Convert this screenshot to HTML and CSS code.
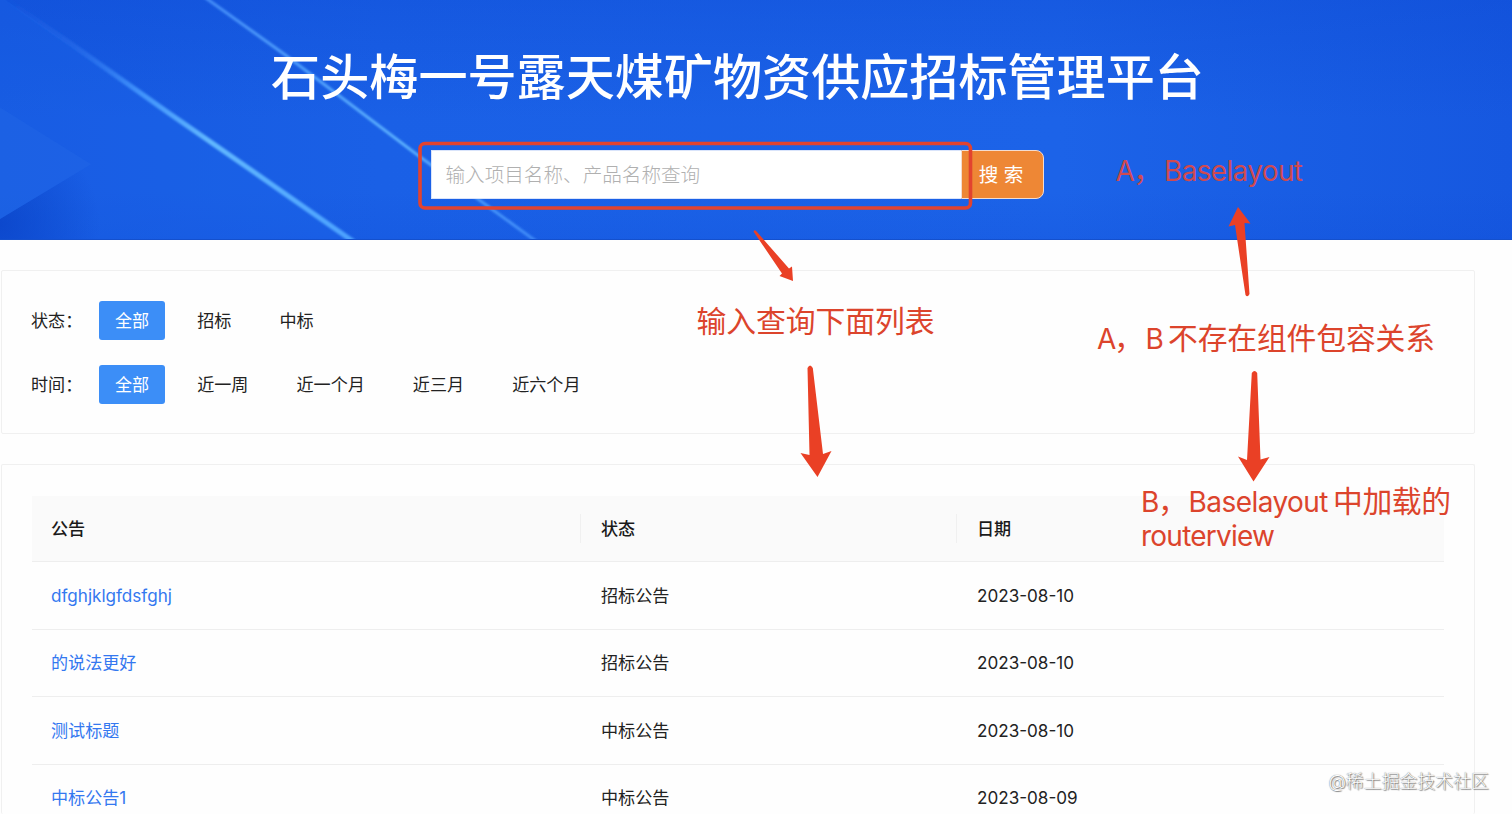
FILE: index.html
```html
<!DOCTYPE html>
<html lang="zh-CN">
<head>
    <meta charset="UTF-8">
    <meta name="viewport" content="width=device-width, initial-scale=1.0">
    <title>石头梅一号露天煤矿物资供应招标管理平台</title>
    <link rel="stylesheet" href="styles.css">
</head>
<body>
    <header class="banner">
        <svg class="banner-bg" viewBox="0 0 1512 240" preserveAspectRatio="none">
            <defs>
                <linearGradient id="base" x1="0" y1="0" x2="1" y2="0">
                    <stop offset="0" stop-color="#1659e0"/>
                    <stop offset="0.25" stop-color="#1a60e6"/>
                    <stop offset="0.7" stop-color="#1c63e8"/>
                    <stop offset="1" stop-color="#1658e0"/>
                </linearGradient>
                <linearGradient id="shade" x1="0" y1="0" x2="0" y2="1">
                    <stop offset="0" stop-color="#0a45d0" stop-opacity="0.3"/>
                    <stop offset="0.5" stop-color="#0a45d0" stop-opacity="0"/>
                    <stop offset="0.8" stop-color="#0a45d0" stop-opacity="0"/>
                    <stop offset="1" stop-color="#0a45d0" stop-opacity="0.15"/>
                </linearGradient>
                <linearGradient id="beam1" gradientUnits="userSpaceOnUse" x1="0" y1="0" x2="350" y2="240">
                    <stop offset="0" stop-color="#2a6ef0" stop-opacity="0"/>
                    <stop offset="0.2" stop-color="#3178f2" stop-opacity="0.4"/>
                    <stop offset="0.4" stop-color="#469aff" stop-opacity="0.9"/>
                    <stop offset="0.6" stop-color="#62b8ff"/>
                    <stop offset="1" stop-color="#4ca2ff"/>
                </linearGradient>
                <linearGradient id="beam2" gradientUnits="userSpaceOnUse" x1="207" y1="0" x2="532" y2="240">
                    <stop offset="0" stop-color="#438cf8"/>
                    <stop offset="0.6" stop-color="#5db2ff"/>
                    <stop offset="1" stop-color="#3f8af8"/>
                </linearGradient>
                <radialGradient id="fold" gradientUnits="userSpaceOnUse" cx="0" cy="225" r="100">
                    <stop offset="0" stop-color="#0840c4" stop-opacity="0.7"/>
                    <stop offset="1" stop-color="#0840c4" stop-opacity="0"/>
                </radialGradient>
                <filter id="soft"><feGaussianBlur stdDeviation="1"/></filter>
            </defs>
            <rect width="1512" height="240" fill="url(#base)"/>
            <rect width="1512" height="240" fill="url(#shade)"/>
            <path d="M0 -4L350 240H0Z" fill="#1f66ec" fill-opacity="0.3"/>
            <path d="M0 220L91 165L120 240H0Z" fill="url(#fold)"/>
            <path d="M0 108L91 165L0 220Z" fill="#2468e6" fill-opacity="0.4"/>
            <path d="M4 -2L71 44L168 113L250 170L354 243" fill="none" stroke="url(#beam1)" stroke-width="5" filter="url(#soft)"/>
            <path d="M203 -4L285 55L418 156L537 243" fill="none" stroke="url(#beam2)" stroke-width="3" filter="url(#soft)"/>
        </svg>
        <div class="banner-content">
            <h1>石头梅一号露天煤矿物资供应招标管理平台</h1>
            <form class="search" onsubmit="return false">
                <input type="text" placeholder="输入项目名称、产品名称查询">
                <button type="submit">搜 索</button>
            </form>
        </div>
    </header>

    <main class="page">
        <section class="card filters">
            <div class="filter-row">
                <span class="label">状态：</span>
                <span class="option active">全部</span>
                <span class="option">招标</span>
                <span class="option">中标</span>
            </div>
            <div class="filter-row">
                <span class="label">时间：</span>
                <span class="option active">全部</span>
                <span class="option">近一周</span>
                <span class="option">近一个月</span>
                <span class="option">近三月</span>
                <span class="option">近六个月</span>
            </div>
        </section>

        <section class="card list">
            <table>
                <colgroup>
                    <col class="col-title">
                    <col class="col-status">
                    <col>
                </colgroup>
                <thead>
                    <tr><th>公告</th><th>状态</th><th>日期</th></tr>
                </thead>
                <tbody>
                    <tr><td><a href="#">dfghjklgfdsfghj</a></td><td>招标公告</td><td>2023-08-10</td></tr>
                    <tr><td><a href="#">的说法更好</a></td><td>招标公告</td><td>2023-08-10</td></tr>
                    <tr><td><a href="#">测试标题</a></td><td>中标公告</td><td>2023-08-10</td></tr>
                    <tr><td><a href="#">中标公告1</a></td><td>中标公告</td><td>2023-08-09</td></tr>
                </tbody>
            </table>
        </section>
    </main>

    <!-- review notes drawn over the page -->
    <svg class="notes" width="1512" height="814" viewBox="0 0 1512 814">
        <rect x="420" y="143.500" width="550.500" height="64.500" rx="5" fill="none" stroke="#e2432f" stroke-width="3.600"/>
        <path d="M753.500 231.500Q755 229 757 232L789 268.500L792 266.500L793 281L779.500 276L782 273.500Z"/>
        <path d="M807.500 368Q810 363 812.800 368L823 454L831.500 451L817.500 477L800.500 453L809.500 455Z"/>
        <path d="M1238 207L1250.500 223.500L1244.500 223L1249.500 294Q1247.500 298 1245.500 295L1235 225L1228.500 226.500Z"/>
        <path d="M1251.800 373Q1254.500 369 1257.200 373L1260.500 459.500L1269.500 457L1253.500 481.500L1238 456.500L1247 460Z"/>
        <text x="696.500" y="332" class="zh" textLength="238">输入查询下面列表</text>
        <text x="1115.500" y="181" class="on-blue">A<tspan class="zh" x="1133">，</tspan><tspan x="1164" textLength="139">Baselayout</tspan></text>
        <text x="1097" y="349">A<tspan class="zh" x="1114">，</tspan><tspan x="1145.500">B</tspan><tspan class="zh" x="1168" textLength="267">不存在组件包容关系</tspan></text>
        <text x="1141" y="512">B<tspan class="zh" x="1158">，</tspan><tspan x="1188.500" textLength="140">Baselayout</tspan><tspan class="zh" x="1333" textLength="118">中加载的</tspan></text>
        <text x="1141" y="546" textLength="134">routerview</text>
    </svg>
    <div class="watermark">@稀土掘金技术社区</div>
</body>
</html>
```

FILE: styles.css
```css
* {
    box-sizing: border-box;
}

body {
    margin: 0;
    height: 814px;
    overflow: hidden;
    position: relative;
    background: #fefefe;
    color: #222;
    font-family: Inter, "Noto Sans CJK SC", sans-serif;
    font-size: 17px;
}

.banner {
    position: relative;
    height: 240px;
    border-bottom: 1px solid #1450cd;
}

.banner-bg {
    position: absolute;
    left: 0;
    top: 0;
    width: 100%;
    height: 100%;
}

.banner-content {
    position: relative;
    width: 1475px;
    display: flex;
    flex-direction: column;
    align-items: center;
}

h1 {
    margin: 42px 0 38px;
    font-size: 49.1px;
    line-height: 70px;
    font-weight: 500;
    color: #fff;
    white-space: nowrap;
}

.search {
    display: flex;
    width: 613px;
    height: 49px;
    margin-right: 1px;
}

.search input {
    flex: 1;
    min-width: 0;
    padding: 0 14px;
    border: 1px solid #d9e4fb;
    border-right: 0;
    border-radius: 0;
    background: #fff;
    font-family: inherit;
    font-size: 19.6px;
    font-weight: 300;
}

.search input::placeholder {
    color: #b0b0b0;
}

.search button {
    width: 83px;
    padding: 0 2px 2px 0;
    border: 1px solid #f3dcd0;
    border-radius: 0 8px 8px 0;
    background: #ee8735;
    color: #fff;
    font-family: inherit;
    font-size: 19.6px;
}

.page {
    height: 574px;
    width: 1475px;
    padding: 30px 0 0 1px;
    display: flex;
    flex-direction: column;
    gap: 30px;
}

.card {
    border: 1px solid #f0f0f0;
    border-radius: 2px;
}

.filters {
    flex: none;
    height: 164px;
    padding: 30px 30px 30px 29px;
}

.filter-row {
    display: flex;
    gap: 16px;
    height: 39px;
    line-height: 39px;
    margin-bottom: 25px;
    font-size: 17.1px;
}

.label {
    width: 52px;
    white-space: nowrap;
}

.option {
    padding: 0 16px;
    border-radius: 3px;
}

.option.active {
    background: #3c8ef7;
    color: #fff;
}

.list {
    flex: 1;
    min-height: 0;
    padding: 31px 30px 0;
    border-bottom: 0;
    overflow: hidden;
}

table {
    width: 1412px;
    table-layout: fixed;
    border-collapse: separate;
    border-spacing: 0;
}

.col-title {
    width: 549px;
}

.col-status {
    width: 376px;
}

th,
td {
    height: 67.5px;
    padding: 1px 20px 0;
    border-bottom: 1px solid #eee;
    text-align: left;
    font-size: 17.1px;
    line-height: 22px;
}

th:first-child,
td:first-child {
    padding-left: 19px;
}

th {
    position: relative;
    height: 66px;
    padding-top: 0;
    background: #fafafa;
    font-weight: 500;
    color: #1a1a1a;
}

th:not(:last-child)::after {
    content: "";
    position: absolute;
    right: 0;
    top: 18px;
    width: 1px;
    height: 29px;
    background: #f0f0f0;
}

td a {
    color: #3478f0;
    text-decoration: none;
}

.notes {
    position: absolute;
    left: 0;
    top: 0;
    pointer-events: none;
    fill: #ea4025;
    font-size: 28px;
}

.notes text {
    fill: #dc442c;
}

.notes .on-blue {
    fill: #cf4a50;
}

.notes .zh {
    font-family: "Noto Sans CJK SC", sans-serif;
    font-size: 29.8px;
}

.watermark {
    position: absolute;
    right: 23px;
    bottom: 19px;
    font-size: 17.9px;
    line-height: 26px;
    color: #fff;
    font-weight: 300;
    text-shadow: 0 0 1px #555, 1px 1px 1px #888;
}
```
